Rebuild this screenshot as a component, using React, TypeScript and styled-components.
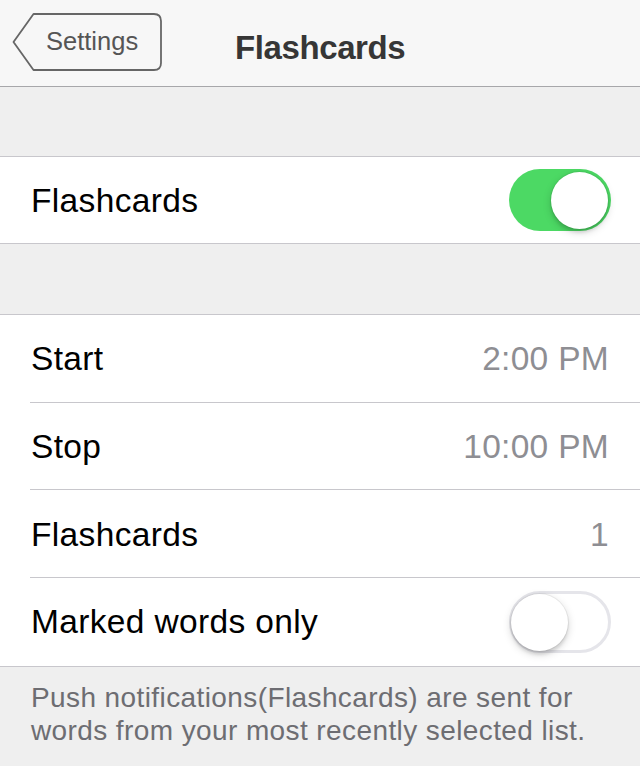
import React from "react";
import styled, { createGlobalStyle } from "styled-components";

const Global = createGlobalStyle`
  html, body { margin: 0; padding: 0; background: #efefef; }
  body { font-family: "Liberation Sans", Arial, sans-serif; -webkit-font-smoothing: antialiased; }
`;

const Screen = styled.div`
  width: 640px;
  height: 766px;
  overflow: hidden;
  background: #efefef;
  display: flex;
  flex-direction: column;
`;

const NavBar = styled.header`
  height: 86px;
  flex: none;
  background: #f7f7f7;
  border-bottom: 1px solid #a7a7aa;
  display: flex;
  align-items: center;
`;

const BackButton = styled.button`
  position: relative;
  margin-left: 12px;
  margin-top: -2px;
  width: 150px;
  height: 58px;
  border: none;
  background: transparent;
  padding: 0 0 0 34px;
  display: flex;
  align-items: center;
  font-family: "Liberation Sans", Arial, sans-serif;
  font-size: 25.5px;
  color: #555555;
  cursor: pointer;
`;

const BackOutline = styled.svg`
  position: absolute;
  left: 0;
  top: 0;
  pointer-events: none;
`;

const BackLabel = styled.span`
  position: relative;
  margin-top: -1px;
`;

const Title = styled.h1`
  margin: 10px 0 0 73px;
  font-size: 33px;
  font-weight: 700;
  letter-spacing: -0.4px;
  color: #363636;
`;

const Spacer = styled.div<{ $h: number }>`
  height: ${(p) => p.$h}px;
  flex: none;
`;

const Group = styled.section`
  background: #ffffff;
  border-top: 1px solid #c8c7cc;
  border-bottom: 1px solid #c8c7cc;
  flex: none;
`;

const Row = styled.div<{ $divider?: boolean; $h?: number }>`
  height: ${(p) => p.$h ?? 87.67}px;
  display: flex;
  align-items: center;
  justify-content: space-between;
  padding: 0 31px;
  position: relative;
  box-sizing: border-box;
  ${(p) =>
    p.$divider &&
    `
    &::after {
      content: "";
      position: absolute;
      left: 30px;
      right: 0;
      bottom: 0;
      height: 1px;
      background: #c8c7cc;
    }
  `}
`;

const Label = styled.span`
  font-size: 33.5px;
  letter-spacing: 0.35px;
  color: #000000;
  margin-top: 1px;
`;

const Value = styled.span`
  font-size: 33.5px;
  letter-spacing: 0.3px;
  color: #8e8e93;
  margin-top: 1px;
`;

const SwitchTrack = styled.div<{ $on: boolean }>`
  width: 102px;
  height: 62px;
  box-sizing: border-box;
  border-radius: 31px;
  margin-right: -2px;
  position: relative;
  background: ${(p) => (p.$on ? "#4cd964" : "#ffffff")};
  border: ${(p) => (p.$on ? "none" : "3px solid #e5e5ea")};
`;

const SwitchKnob = styled.div<{ $on: boolean }>`
  position: absolute;
  width: 57px;
  height: 57px;
  border-radius: 50%;
  background: #ffffff;
  top: ${(p) => (p.$on ? "3px" : "0px")};
  left: ${(p) => (p.$on ? "42px" : "-1px")};
  box-shadow: 0 3px 8px rgba(0, 0, 0, 0.18), 0 0 0 1px rgba(0, 0, 0, 0.06),
    0 4px 3px rgba(0, 0, 0, 0.08);
`;

const Footer = styled.footer`
  flex: 1;
  padding: 14px 31px 0;
  font-size: 28px;
  letter-spacing: 0.4px;
  line-height: 33px;
  color: #6d6d72;
`;

function Switch({ on }: { on: boolean }) {
  return (
    <SwitchTrack $on={on}>
      <SwitchKnob $on={on} />
    </SwitchTrack>
  );
}

export default function App() {
  return (
    <>
      <Global />
      <Screen>
        <NavBar>
          <BackButton>
            <BackOutline width="150" height="58" viewBox="0 0 150 58">
              <path
                d="M21.5 1 H142 Q149 1 149 8 V50 Q149 57 142 57 H21.5 L1.5 29 Z"
                fill="none"
                stroke="#666666"
                strokeWidth="1.8"
                strokeLinejoin="round"
              />
            </BackOutline>
            <BackLabel>Settings</BackLabel>
          </BackButton>
          <Title>Flashcards</Title>
        </NavBar>
        <Spacer $h={69} />
        <Group>
          <Row $h={86}>
            <Label>Flashcards</Label>
            <Switch on={true} />
          </Row>
        </Group>
        <Spacer $h={70} />
        <Group>
          <Row $divider>
            <Label>Start</Label>
            <Value>2:00 PM</Value>
          </Row>
          <Row $divider>
            <Label>Stop</Label>
            <Value>10:00 PM</Value>
          </Row>
          <Row $divider>
            <Label>Flashcards</Label>
            <Value>1</Value>
          </Row>
          <Row>
            <Label>Marked words only</Label>
            <Switch on={false} />
          </Row>
        </Group>
        <Footer>
          Push notifications(Flashcards) are sent for words from your most recently selected list.
        </Footer>
      </Screen>
    </>
  );
}
